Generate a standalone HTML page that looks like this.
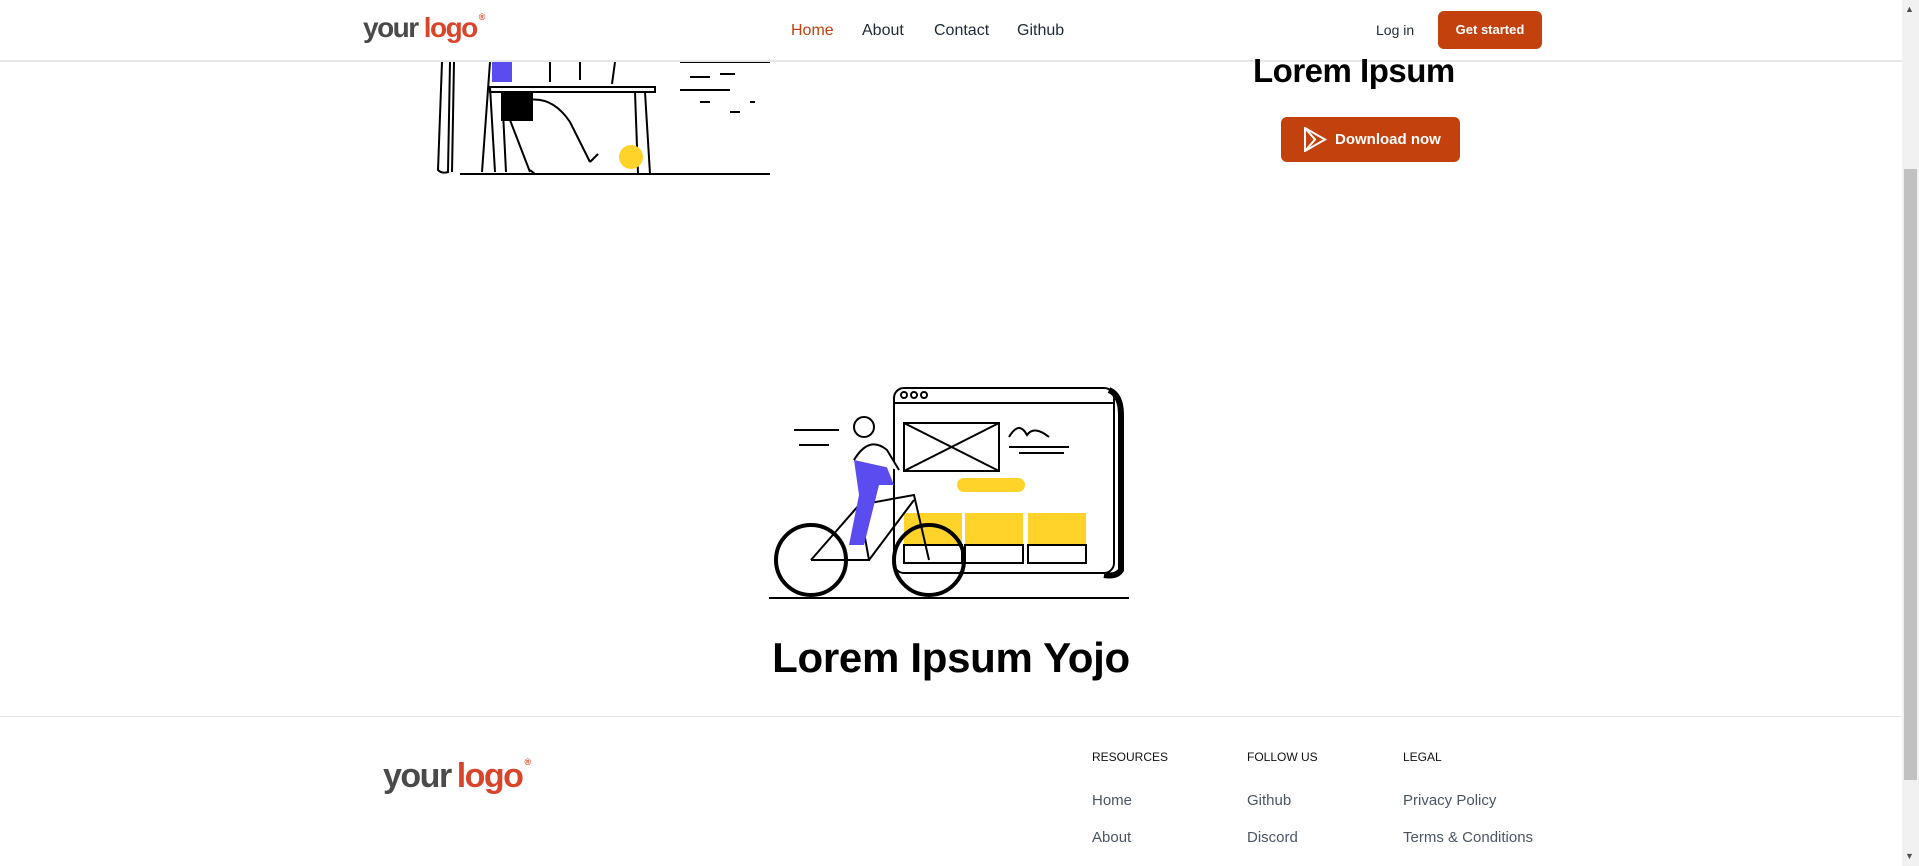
<!DOCTYPE html>
<html><head><meta charset="utf-8"><style>
*{margin:0;padding:0;box-sizing:border-box}
body{width:1919px;height:866px;overflow:hidden;background:#fff;font-family:"Liberation Sans",sans-serif;position:relative}
.a{position:absolute;white-space:nowrap}
.logo{font-size:28px;font-weight:bold;letter-spacing:-1.5px}
.logo .y{color:#4a4a4a}.logo .l{color:#d9452b;margin-left:6px}.logo sup{font-size:9px;color:#d9452b;vertical-align:top;letter-spacing:0;margin-left:2px}
.nav{font-size:16px;color:#1f2937;top:22px}
.ft{font-size:12px;color:#111;top:750px}
.fl{font-size:15px;color:#4b5563}
</style></head><body>
<svg class="a" style="left:430px;top:62px" width="350" height="115" viewBox="0 0 350 115">
<g stroke="#000" stroke-width="2" fill="none">
<path d="M12 0 L8 108 Q12 112 18 110 L20 0"/><path d="M24 0 L22 110"/>
<rect x="62" y="0" width="20" height="20" fill="#5b4cf0" stroke="none"/>
<path d="M60 0 L52 110 M60 25 L65 110"/>
<path d="M60 25 L225 25 L225 30 L60 30Z"/>
<path d="M72 30 L76 110 M215 30 L220 112 M205 30 L208 112"/>
<rect x="72" y="30" width="30" height="28" fill="#000"/>
<path d="M90 40 Q120 30 140 60 L160 100 M80 58 L100 110 M160 100 L168 92"/>
<path d="M100 108 L105 112 M120 0 L120 20 M150 0 L150 18 M185 0 L182 22"/>
<path d="M30 112 L340 112 M120 112 L150 112"/>
<path d="M250 0 L340 0 M260 15 L280 15 M290 12 L305 12 M250 28 L300 28 M320 40 L325 40 M270 40 L280 40 M300 50 L310 50"/>
</g>
<circle cx="201" cy="95" r="12" fill="#ffd32a"/>
</svg>
<div class="a" style="left:0;top:0;width:1902px;height:62px;background:#fff;border-bottom:2px solid #e5e7eb"></div>
<div class="a logo" style="left:363px;top:12px"><span class="y">your</span><span class="l">logo</span><sup>®</sup></div>
<div class="a nav" style="left:791px;color:#c2410c">Home</div>
<div class="a nav" style="left:862px">About</div>
<div class="a nav" style="left:934px">Contact</div>
<div class="a nav" style="left:1017px">Github</div>
<div class="a" style="left:1376px;top:22px;font-size:14px;color:#1f2937">Log in</div>
<div class="a" style="left:1438px;top:11px;width:104px;height:38px;background:#c2410c;border-radius:6px;color:#fff;font-size:13px;font-weight:bold;text-align:center;line-height:38px">Get started</div>
<div class="a" style="left:1253px;top:52px;font-size:33px;font-weight:bold;color:#000;letter-spacing:-0.5px">Lorem Ipsum</div>
<div class="a" style="left:1281px;top:117px;width:179px;height:45px;background:#c2410c;border-radius:6px;color:#fff;font-size:15px;font-weight:bold;line-height:45px;padding-left:54px">Download now</div>
<svg class="a" style="left:1303px;top:127px" width="24" height="25" viewBox="0 0 24 25"><path d="M2 1 L22 12.5 L2 24Z M2 1 L12 12.5 L2 24" fill="none" stroke="#fff" stroke-width="2"/></svg>
<svg class="a" style="left:769px;top:385px" width="365" height="215" viewBox="0 0 365 215">
<g stroke="#000" stroke-width="2" fill="none">
<rect x="125" y="3" width="220" height="185" rx="10" fill="#fff"/>
<path d="M340 5 Q352 10 352 30 L352 185 Q348 192 335 190" stroke-width="6"/>
<path d="M125 18 L345 18"/><circle cx="135" cy="10" r="3"/><circle cx="145" cy="10" r="3"/><circle cx="155" cy="10" r="3"/>
<rect x="135" y="38" width="95" height="48"/><path d="M135 38 L230 86 M230 38 L135 86"/>
<path d="M240 52 Q250 35 258 50 Q265 40 280 52 M240 62 L300 62 M250 68 L295 68"/>
</g>
<rect x="188" y="93" width="68" height="14" rx="7" fill="#ffd32a"/>
<rect x="135" y="128" width="58" height="32" fill="#ffd32a"/><rect x="196" y="128" width="58" height="32" fill="#ffd32a"/><rect x="259" y="128" width="58" height="32" fill="#ffd32a"/>
<g stroke="#000" stroke-width="2" fill="none">
<rect x="135" y="160" width="58" height="18"/><rect x="196" y="160" width="58" height="18"/><rect x="259" y="160" width="58" height="18"/>
<circle cx="42" cy="175" r="35" stroke-width="4"/><circle cx="160" cy="175" r="35" stroke-width="4"/>
<path d="M42 175 L90 120 L145 110 L160 175 M90 120 L100 175 L42 175 M100 175 L145 115"/>
<path d="M0 213 L360 213 M25 45 L70 45 M30 60 L60 60"/>
</g>
<path d="M85 75 L115 75 L125 100 L110 100 L95 160 L80 160 L90 110Z" fill="#5b4cf0"/>
<path d="M85 75 Q100 50 118 65 L130 85" stroke="#000" stroke-width="2" fill="#fff"/>
<circle cx="95" cy="42" r="10" fill="#fff" stroke="#000" stroke-width="2"/>
</svg>
<div class="a" style="left:0;width:1902px;top:634px;text-align:center;font-size:42px;font-weight:bold;color:#000;letter-spacing:-0.3px">Lorem Ipsum Yojo</div>
<div class="a" style="left:0;top:716px;width:1902px;height:1px;background:#e5e7eb"></div>
<div class="a logo" style="left:383px;top:757px;font-size:34px"><span class="y">your</span><span class="l">logo</span><sup>®</sup></div>
<div class="a ft" style="left:1092px">RESOURCES</div>
<div class="a ft" style="left:1247px">FOLLOW US</div>
<div class="a ft" style="left:1403px">LEGAL</div>
<div class="a fl" style="left:1092px;top:792px">Home</div>
<div class="a fl" style="left:1092px;top:829px">About</div>
<div class="a fl" style="left:1247px;top:792px">Github</div>
<div class="a fl" style="left:1247px;top:829px">Discord</div>
<div class="a fl" style="left:1403px;top:792px">Privacy Policy</div>
<div class="a fl" style="left:1403px;top:829px">Terms &amp; Conditions</div>
<div class="a" style="left:1902px;top:0;width:17px;height:866px;background:#f1f1f1"></div>
<div class="a" style="left:1904px;top:169px;width:13px;height:611px;background:#c1c1c1"></div>
<div class="a" style="left:1905px;top:4px;font-size:9px;color:#505050">▲</div>
<div class="a" style="left:1905px;top:851px;font-size:9px;color:#505050">▼</div>
</body></html>
